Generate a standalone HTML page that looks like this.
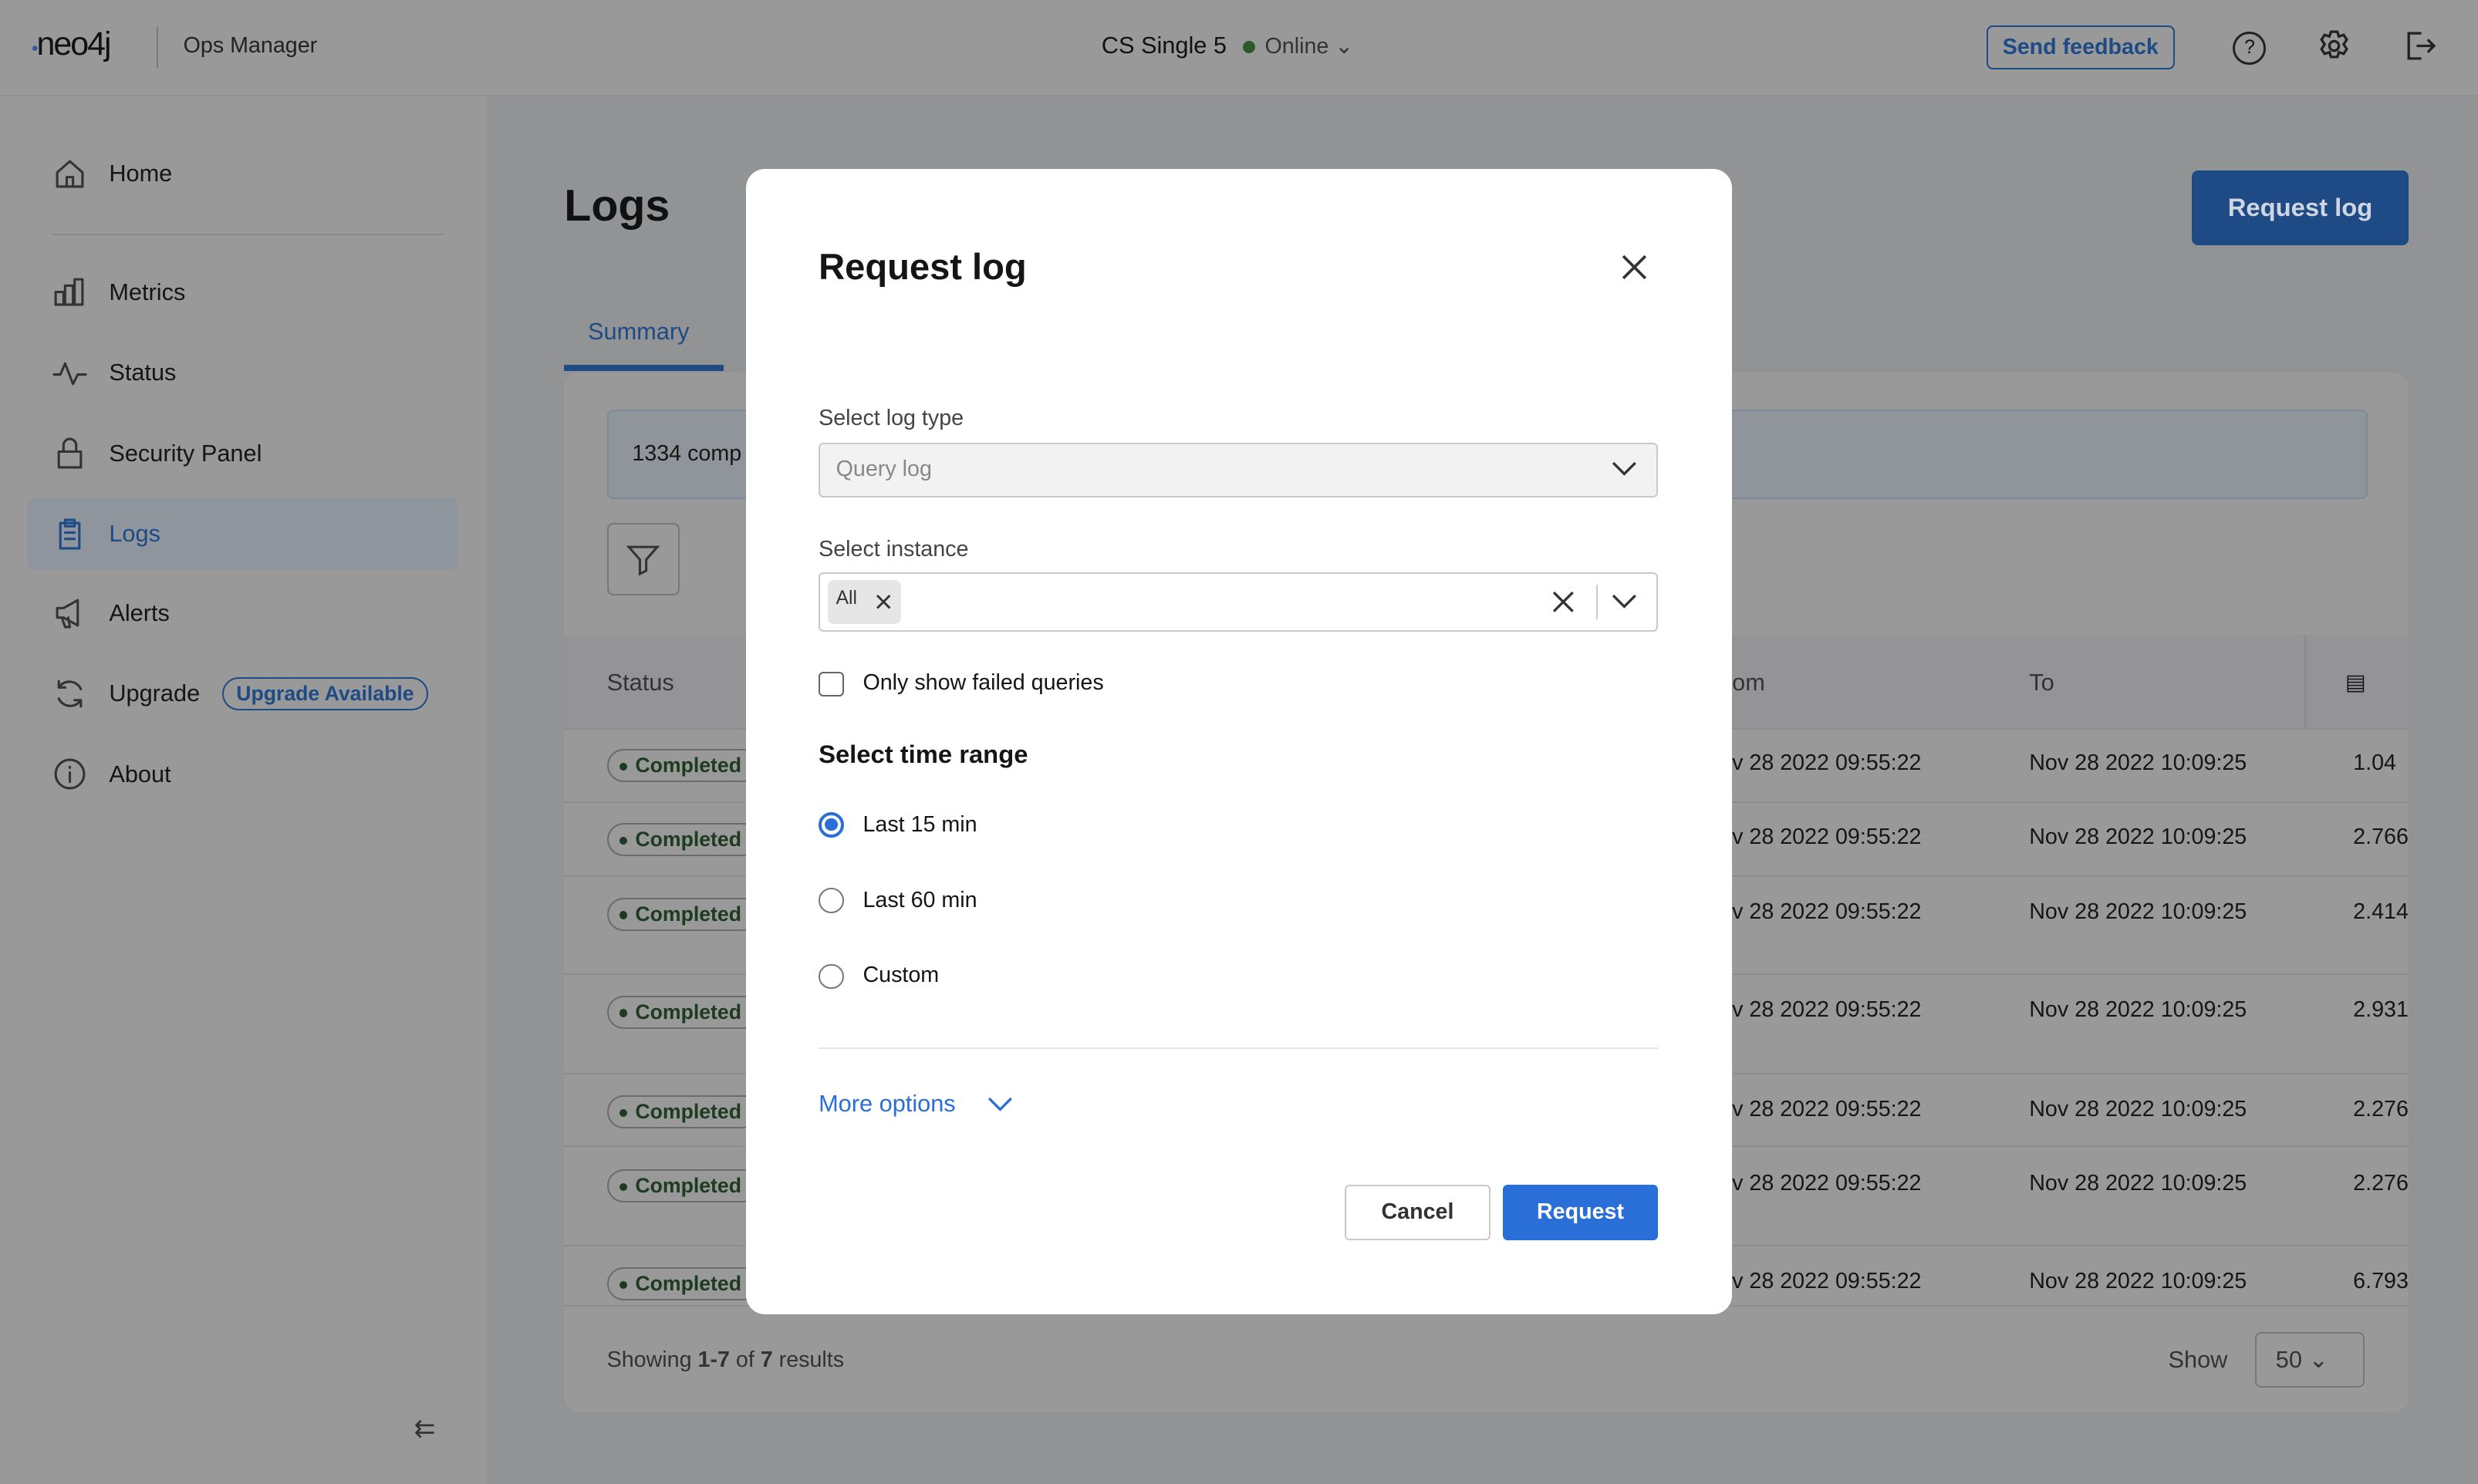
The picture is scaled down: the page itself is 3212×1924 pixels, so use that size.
<!DOCTYPE html>
<html><head><meta charset="utf-8"><style>
html,body{margin:0;padding:0;width:3212px;height:1924px;overflow:hidden;background:#929395}
#r{zoom:2.04847;width:1568px;height:939px;position:relative;font-family:"Liberation Sans",sans-serif;color:#111}
.a{position:absolute}
.top{left:0;top:0;width:1568px;height:60px;background:#999;border-bottom:1px solid #8e8f93}
.side{left:0;top:61px;width:308px;height:878px;background:#999}
.nav{position:absolute;left:33px;font-size:15px;color:#151515;display:flex;align-items:center;gap:14px}
.nav svg{width:22px;height:22px;fill:none;stroke:#333;stroke-width:1.5;stroke-linejoin:round;stroke-linecap:round}
.card{left:357px;top:236px;width:1167px;height:658px;background:#999;border-radius:10px}
.row{position:absolute;left:357px;width:1167px;height:1px;background:#8c8d90}
.pill{position:absolute;left:384px;font-size:13px;color:#1c3b20;font-weight:bold;border:1px solid #6b6b6b;border-radius:12px;padding:2px 8px 2px 7px;width:80px;overflow:hidden;white-space:nowrap}
.pill:before{content:"";display:inline-block;width:5px;height:5px;border-radius:50%;background:#1c3b20;margin-right:5px;vertical-align:middle}
.t{position:absolute;font-size:14px;color:#151515}
.modal{left:472px;top:107px;width:624px;height:725px;background:#fff;border-radius:12px}
.m{position:absolute;color:#151515}
.radio{position:absolute;left:518px;width:16px;height:16px;border:1px solid #777;border-radius:50%;box-sizing:border-box}
</style></head><body><div id="r">
<div class="a top"></div>
<div class="a" style="left:20px;top:16px;font-size:21px;color:#111;letter-spacing:-1px"><span style="color:#2a5ea8;font-size:12px">•</span>neo4j</div>
<div class="a" style="left:99px;top:17px;width:1px;height:26px;background:#777"></div>
<div class="a" style="left:116px;top:21px;font-size:14px;color:#222">Ops Manager</div>
<div class="a" style="left:697px;top:20px;font-size:15px;color:#111">CS Single 5 <span style="display:inline-block;width:8px;height:8px;border-radius:50%;background:#2a5a2a;margin:0 6px"></span><span style="color:#333;font-size:14px">Online ⌄</span></div>
<div class="a" style="left:1257px;top:16px;width:117px;height:26px;border:1px solid #1e4a86;border-radius:4px;font-size:14px;color:#1e4a86;text-align:center;line-height:26px;font-weight:bold">Send feedback</div>
<div class="a" style="left:1413px;top:20px;width:18px;height:18px;border:1.6px solid #222;border-radius:50%;font-size:12px;text-align:center;line-height:18px">?</div>
<svg class="a" style="left:1466px;top:18px" width="22" height="22" fill="none" stroke="#222" stroke-width="1.6"><circle cx="11" cy="11" r="3"/><path d="M9 2h4l1 3 3-1 2 3-2 3 2 3-2 3-3-1-1 3H9l-1-3-3 1-2-3 2-3-2-3 2-3 3 1z"/></svg>
<svg class="a" style="left:1520px;top:18px" width="22" height="22" fill="none" stroke="#222" stroke-width="1.6"><path d="M12 3H4v16h8M9 11h11M16 7l4 4-4 4"/></svg>

<div class="a side"></div>
<div class="nav" style="top:99px"><svg viewBox="0 0 22 22"><path d="M3 10L11 3l8 7v9H3z M9 19v-6h4v6"/></svg>Home</div>
<div class="a" style="left:33px;top:148px;width:248px;height:1px;background:#8a8a8a"></div>
<div class="nav" style="top:174px"><svg viewBox="0 0 22 22"><path d="M2 19V11h5v8zM8 19V7h5v12zM14 19V3h5v16z"/></svg>Metrics</div>
<div class="nav" style="top:225px"><svg viewBox="0 0 22 22"><path d="M1 12h4l3-7 5 13 3-6h5"/></svg>Status</div>
<div class="nav" style="top:276px"><svg viewBox="0 0 22 22"><path d="M4 10h14v10H4zM7 10V6a4 4 0 0 1 8 0v4"/></svg>Security Panel</div>
<div class="a" style="left:17px;top:315px;width:273px;height:46px;background:#8e959c;border-radius:6px"></div>
<div class="nav" style="top:327px;color:#1e4a86"><svg viewBox="0 0 22 22" style="stroke:#1e4a86"><path d="M5 4h12v16H5zM8 2h6v4H8zM8 10h6M8 14h6"/></svg>Logs</div>
<div class="nav" style="top:377px"><svg viewBox="0 0 22 22"><path d="M3 8h4l9-5v16l-9-5H3zM6 14l2 6h3l-1-6"/></svg>Alerts</div>
<div class="nav" style="top:428px"><svg viewBox="0 0 22 22"><path d="M18 8A8 8 0 0 0 4 7M4 3v4h4M4 14a8 8 0 0 0 14 1M18 19v-4h-4"/></svg>Upgrade <span style="border:1px solid #1e4a86;color:#1e4a86;border-radius:12px;font-size:13px;font-weight:bold;padding:2px 8px">Upgrade Available</span></div>
<div class="nav" style="top:479px"><svg viewBox="0 0 22 22"><circle cx="11" cy="11" r="9"/><path d="M11 10v6M11 6.5v.5"/></svg>About</div>
<div class="a" style="left:262px;top:895px;font-size:16px;color:#333">⇇</div>

<div class="a" style="left:357px;top:114px;font-size:28px;font-weight:bold">Logs</div>
<div class="a" style="left:1387px;top:108px;width:137px;height:47px;background:#1e4a86;border-radius:4px;color:#d0d6e0;font-size:16px;font-weight:bold;text-align:center;line-height:47px">Request log</div>
<div class="a" style="left:372px;top:201px;font-size:15px;color:#1e4a86">Summary</div>
<div class="a" style="left:357px;top:231px;width:101px;height:4px;background:#1e4a86"></div>
<div class="a card"></div>
<div class="a" style="left:384px;top:259px;width:1112px;height:55px;background:#8f959b;border:1px solid #7c8a99;border-radius:4px"></div>
<div class="t" style="left:400px;top:279px">1334 comp</div>
<div class="a" style="left:384px;top:331px;width:46px;height:46px;border:1px solid #777;border-radius:4px;box-sizing:border-box"></div>
<svg class="a" style="left:396px;top:343px" width="22" height="22" fill="none" stroke="#333" stroke-width="1.5"><path d="M2 3h18l-7 8v7l-4 2v-9z"/></svg>
<div class="a" style="left:357px;top:402px;width:1167px;height:60px;background:#949496"></div>
<div class="t" style="left:384px;top:423px;font-size:15px;color:#333">Status</div>
<div class="t" style="left:1096px;top:423px;font-size:15px;color:#333">om</div>
<div class="t" style="left:1284px;top:423px;font-size:15px;color:#333">To</div>
<div class="a" style="left:1458px;top:402px;width:1px;height:60px;background:#8a8a8c"></div>
<div class="t" style="left:1484px;top:423px">▤</div>
<div class="row" style="top:461px"></div><div class="row" style="top:507px"></div><div class="row" style="top:554px"></div><div class="row" style="top:616px"></div><div class="row" style="top:679px"></div><div class="row" style="top:725px"></div><div class="row" style="top:788px"></div><div class="row" style="top:826px"></div>
<div class="pill" style="top:474px">Completed</div><div class="pill" style="top:521px">Completed</div><div class="pill" style="top:568px">Completed</div><div class="pill" style="top:630px">Completed</div><div class="pill" style="top:693px">Completed</div><div class="pill" style="top:740px">Completed</div><div class="pill" style="top:802px">Completed</div>
<div class="t" style="left:1096px;top:475px">v 28 2022 09:55:22</div><div class="t" style="left:1284px;top:475px">Nov 28 2022 10:09:25</div><div class="t" style="left:1489px;top:475px">1.04</div>
<div class="t" style="left:1096px;top:522px">v 28 2022 09:55:22</div><div class="t" style="left:1284px;top:522px">Nov 28 2022 10:09:25</div><div class="t" style="left:1489px;top:522px">2.766</div>
<div class="t" style="left:1096px;top:569px">v 28 2022 09:55:22</div><div class="t" style="left:1284px;top:569px">Nov 28 2022 10:09:25</div><div class="t" style="left:1489px;top:569px">2.414</div>
<div class="t" style="left:1096px;top:631px">v 28 2022 09:55:22</div><div class="t" style="left:1284px;top:631px">Nov 28 2022 10:09:25</div><div class="t" style="left:1489px;top:631px">2.931</div>
<div class="t" style="left:1096px;top:694px">v 28 2022 09:55:22</div><div class="t" style="left:1284px;top:694px">Nov 28 2022 10:09:25</div><div class="t" style="left:1489px;top:694px">2.276</div>
<div class="t" style="left:1096px;top:741px">v 28 2022 09:55:22</div><div class="t" style="left:1284px;top:741px">Nov 28 2022 10:09:25</div><div class="t" style="left:1489px;top:741px">2.276</div>
<div class="t" style="left:1096px;top:803px">v 28 2022 09:55:22</div><div class="t" style="left:1284px;top:803px">Nov 28 2022 10:09:25</div><div class="t" style="left:1489px;top:803px">6.793</div>
<div class="t" style="left:384px;top:853px;color:#333">Showing <b>1-7</b> of <b>7</b> results</div>
<div class="t" style="left:1372px;top:852px;font-size:15px;color:#333">Show</div>
<div class="a" style="left:1427px;top:843px;width:69px;height:35px;border:1px solid #777;border-radius:4px;box-sizing:border-box;font-size:15px;padding:8px 12px;color:#333">50 ⌄</div>

<div class="a modal"></div>
<div class="m" style="left:518px;top:155px;font-size:23px;font-weight:bold">Request log</div>
<svg class="a" style="left:1025px;top:160px" width="18" height="18"><path d="M2 2L16 16M16 2L2 16" stroke="#333" stroke-width="1.8"/></svg>
<div class="m" style="left:518px;top:257px;font-size:14px;color:#444">Select log type</div>
<div class="a" style="left:518px;top:280px;width:531px;height:35px;background:#f2f2f2;border:1px solid #c8c9cc;border-radius:3px;box-sizing:border-box"></div>
<div class="m" style="left:529px;top:289px;font-size:14px;color:#888">Query log</div>
<svg class="a" style="left:1020px;top:292px" width="16" height="10"><path d="M1 1L8 8L15 1" stroke="#333" stroke-width="1.6" fill="none"/></svg>
<div class="m" style="left:518px;top:340px;font-size:14px;color:#444">Select instance</div>
<div class="a" style="left:518px;top:362px;width:531px;height:38px;background:#fff;border:1px solid #c8c9cc;border-radius:3px;box-sizing:border-box"></div>
<div class="a" style="left:524px;top:367px;width:46px;height:28px;background:#e6e6e6;border-radius:4px"></div>
<div class="m" style="left:529px;top:372px;font-size:12px;color:#333">All</div>
<svg class="a" style="left:554px;top:376px" width="10" height="10"><path d="M1 1L9 9M9 1L1 9" stroke="#333" stroke-width="1.4"/></svg>
<svg class="a" style="left:982px;top:374px" width="14" height="14"><path d="M1 1L13 13M13 1L1 13" stroke="#333" stroke-width="1.6"/></svg>
<div class="a" style="left:1010px;top:370px;width:1px;height:22px;background:#ccc"></div>
<svg class="a" style="left:1020px;top:376px" width="16" height="10"><path d="M1 1L8 8L15 1" stroke="#333" stroke-width="1.6" fill="none"/></svg>
<div class="a" style="left:518px;top:425px;width:16px;height:16px;border:1px solid #666;border-radius:3px;box-sizing:border-box"></div>
<div class="m" style="left:546px;top:424px;font-size:14px">Only show failed queries</div>
<div class="m" style="left:518px;top:468px;font-size:16px;font-weight:bold">Select time range</div>
<div class="radio" style="top:514px;border:2px solid #2a6ed8"><div style="margin:2px;width:8px;height:8px;border-radius:50%;background:#2a6ed8"></div></div>
<div class="m" style="left:546px;top:514px;font-size:14px">Last 15 min</div>
<div class="radio" style="top:562px"></div><div class="m" style="left:546px;top:562px;font-size:14px">Last 60 min</div>
<div class="radio" style="top:610px"></div><div class="m" style="left:546px;top:609px;font-size:14px">Custom</div>
<div class="a" style="left:518px;top:663px;width:531px;height:1px;background:#e6e6e6"></div>
<div class="m" style="left:518px;top:690px;font-size:15px;color:#2a6ed8">More options</div>
<svg class="a" style="left:625px;top:694px" width="16" height="10"><path d="M1 1L8 8L15 1" stroke="#2a6ed8" stroke-width="1.6" fill="none"/></svg>
<div class="a" style="left:851px;top:750px;width:92px;height:35px;border:1px solid #c8c9cc;border-radius:3px;box-sizing:border-box;font-size:14px;font-weight:bold;text-align:center;line-height:33px;color:#333">Cancel</div>
<div class="a" style="left:951px;top:750px;width:98px;height:35px;background:#2a6ed8;border-radius:3px;font-size:14px;font-weight:bold;text-align:center;line-height:35px;color:#fff">Request</div>
</div></body></html>
